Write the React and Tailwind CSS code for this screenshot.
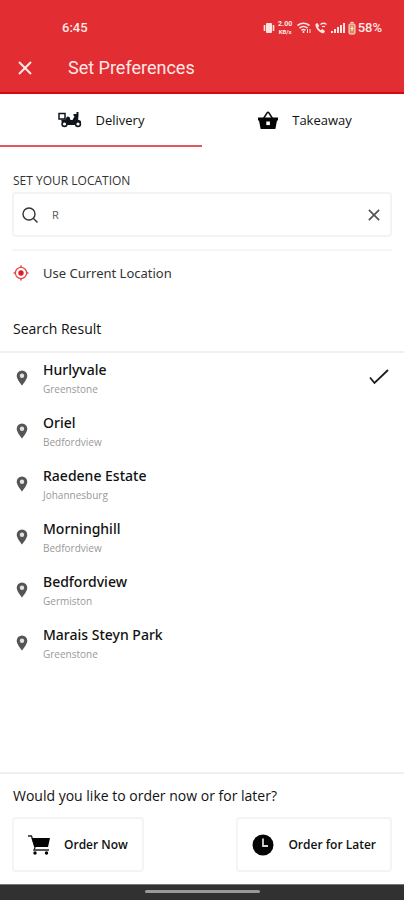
import React, { useState } from "react";

const places = [
  { name: "Hurlyvale", area: "Greenstone" },
  { name: "Oriel", area: "Bedfordview" },
  { name: "Raedene Estate", area: "Johannesburg" },
  { name: "Morninghill", area: "Bedfordview" },
  { name: "Bedfordview", area: "Germiston" },
  { name: "Marais Steyn Park", area: "Greenstone" },
];

function CloseIcon({ className }) {
  return (
    <svg viewBox="0 0 14 14" className={className} fill="none" stroke="currentColor" aria-hidden="true">
      <path d="M1 1l12 12M13 1L1 13" />
    </svg>
  );
}

function VibrateIcon() {
  return (
    <svg viewBox="0 0 12 14" className="h-[14px] w-3" fill="#ffe3e0" aria-hidden="true">
      <rect x="3" y="2" width="6" height="10" rx="1" />
      <path d="M1.500 4v6M10.500 4v6" stroke="#ffe3e0" strokeWidth="1.600" />
    </svg>
  );
}

function SignalIcons() {
  return (
    <svg viewBox="32 0 61 14" className="h-[14px] w-[61px]" fill="#ffe3e0" aria-hidden="true">
      <g fill="none" stroke="#ffe3e0" strokeWidth="1.600">
        <path d="M33.500 4.500q6-4.500 12 0M35.500 7q4-3 8 0M37.500 9.300q2-1.500 4 0" />
        <path d="M43.500 8v4M46 8v4" strokeWidth="1" />
      </g>
      <circle cx="39.500" cy="11" r="1" />
      <path d="M51.500 3l2-1 1.800 3-1.300 1.300q1 2 2.800 3l1.500-1.300 2.700 2-1 2q-1.500.8-4-1Q51 7.500 51.500 3z" />
      <path d="M56.500 3.500q3-2.500 6 0M58 5.800q1.500-1 3 0" fill="none" stroke="#ffe3e0" strokeWidth="1.300" />
      <rect x="67" y="10" width="2" height="2" />
      <rect x="70" y="8" width="2" height="4" />
      <rect x="73" y="6" width="2" height="6" />
      <rect x="76" y="4" width="2" height="8" />
      <rect x="79" y="2" width="2" height="10" />
      <rect x="85" y="3" width="6" height="10" rx="1" fill="#d98a55" stroke="#ffe3e0" />
      <path d="M86.500 1.500h3" stroke="#ffe3e0" strokeWidth="1.200" />
      <path d="M88 5v5M86.500 7.500h3" stroke="#fff3ec" />
    </svg>
  );
}

function ScooterIcon() {
  return (
    <svg viewBox="0 0 24 16" className="h-4 w-6" aria-hidden="true">
      <path d="M1 1.500h6v5.500H1z" fill="#fff" stroke="#10141c" strokeWidth="1.500" />
      <path d="M3 7.500h4.500L9 4.500l2.500.5 1 3h2l2-3.500-1-1V2h3V0h2v4l-.5 3.500 3 1.500v1.500h-3.500l-3 2.500H9.500L8 10.500H4z" fill="#10141c" />
      <circle cx="6.500" cy="12" r="2.400" fill="#fff" stroke="#10141c" strokeWidth="1.600" />
      <circle cx="20" cy="12" r="2.400" fill="#fff" stroke="#10141c" strokeWidth="1.600" />
    </svg>
  );
}

function BasketIcon() {
  return (
    <svg viewBox="0 0 20 18" className="h-[18px] w-5" aria-hidden="true">
      <path d="M5.500 7.500L9 2q1-1.300 2 0l3.500 5.500" fill="none" stroke="#111" strokeWidth="1.500" />
      <path d="M0 6.500h20v3h-1L17.500 17.500q-.2.500-1 .5h-13q-.8 0-1-.5L1 9.500H0z" fill="#050505" />
      <rect x="8.300" y="10.500" width="3.600" height="3.600" fill="#fff" />
    </svg>
  );
}

function SearchIcon() {
  return (
    <svg viewBox="0 0 16 16" className="size-4 shrink-0" fill="none" stroke="#333" strokeWidth="1.400" aria-hidden="true">
      <circle cx="7" cy="7" r="6" />
      <path d="M11.500 11.500l4 4" />
    </svg>
  );
}

function TargetIcon() {
  return (
    <svg viewBox="0 0 16 16" className="size-4 shrink-0" aria-hidden="true">
      <circle cx="8" cy="8" r="5.600" fill="none" stroke="#e04a4a" strokeWidth="1.300" />
      <path d="M8 .5v2M8 13.500v2M.5 8h2M13.500 8h2" stroke="#e04a4a" strokeWidth="1.600" />
      <circle cx="8" cy="8" r="2.700" fill="#dc1f26" />
    </svg>
  );
}

function PinIcon() {
  return (
    <svg viewBox="0 0 12 16" className="h-4 w-3 shrink-0" aria-hidden="true">
      <path d="M6 .5A5.300 5.300 0 0 0 .7 5.800C.7 9.500 6 15.500 6 15.500s5.300-6 5.300-9.700A5.300 5.300 0 0 0 6 .5z" fill="#555" />
      <circle cx="6" cy="5.700" r="2.200" fill="#e2e2e2" />
    </svg>
  );
}

function CheckIcon() {
  return (
    <svg viewBox="0 0 20 16" className="h-4 w-5 shrink-0" fill="none" stroke="#1c1c1c" strokeWidth="1.800" aria-hidden="true">
      <path d="M1 8.500l4.500 5.500L19 1" />
    </svg>
  );
}

function CartIcon() {
  return (
    <svg viewBox="0 0 22 20" className="h-5 w-[22px] shrink-0" aria-hidden="true">
      <path d="M0 1h3.500l3.500 11.500-1 2.500h15" fill="none" stroke="#222" strokeWidth="1.300" />
      <path d="M3.500 3H22l-2 9H6.500z" fill="#050505" />
      <circle cx="7" cy="18" r="1.700" />
      <circle cx="18.500" cy="18" r="1.700" />
    </svg>
  );
}

function ClockIcon() {
  return (
    <svg viewBox="0 0 22 22" className="size-[22px] shrink-0" aria-hidden="true">
      <circle cx="11" cy="11" r="10.500" fill="#050505" />
      <path d="M11 4.500v7.500h5" fill="none" stroke="#d8d8d8" strokeWidth="1.800" />
    </svg>
  );
}

export default function App() {
  const [query, setQuery] = useState("R");
  const [selected, setSelected] = useState("Hurlyvale");

  return (
    <div className="flex min-h-screen flex-col bg-white font-['Open_Sans',sans-serif] text-[13px] leading-5 text-[#111]">
      <header className="border-b-2 border-[#cf0a10] bg-[#e22d32] text-[#ffe9e6]">
        <div className="flex items-center justify-between pt-[18px] pr-[22px] pl-[62px] font-[Roboto,sans-serif] font-medium">
          <span>6:45</span>
          <div className="flex items-center gap-px">
            <VibrateIcon />
            <span className="flex w-[19px] flex-col items-center font-bold">
              <span className="text-[7px] leading-[8px]">2.00</span>
              <span className="text-[6px] leading-[8px]">KB/s</span>
            </span>
            <SignalIcons />
            <span>58%</span>
          </div>
        </div>
        <div className="flex items-center gap-9 px-[18px] pt-4 pb-[10px]">
          <button type="button" aria-label="Close">
            <CloseIcon className="size-[14px] stroke-2" />
          </button>
          <h1 className="font-[Roboto,sans-serif] text-lg leading-7">Set Preferences</h1>
        </div>
      </header>

      <nav className="grid grid-cols-2">
        <button type="button" className="flex h-[53px] items-center justify-center gap-[14px] border-b-2 border-[#df5a60]">
          <ScooterIcon />
          Delivery
        </button>
        <button type="button" className="flex h-[53px] items-center justify-center gap-[14px] border-b-2 border-transparent pl-1">
          <BasketIcon />
          Takeaway
        </button>
      </nav>

      <main className="pt-6">
        <section className="px-3">
          <label htmlFor="location" className="block pl-px text-xs leading-5 text-[#333]">SET YOUR LOCATION</label>
          <div className="mt-px flex h-[45px] items-center gap-[14px] rounded border-2 border-[#f3f3f3] px-2">
            <SearchIcon />
            <input
              id="location"
              value={query}
              onChange={(e) => setQuery(e.target.value)}
              className="min-w-0 flex-1 text-[11px] text-[#555] outline-none"
            />
            <button type="button" aria-label="Clear" onClick={() => setQuery("")} className="pr-[2px]">
              <CloseIcon className="size-3 stroke-[#555] stroke-2" />
            </button>
          </div>
          <div className="mt-3 border-t-2 border-[#f6f6f6] pt-3">
            <button type="button" className="flex items-center gap-[14px] pl-px font-['Noto_Sans',sans-serif] text-[#333]">
              <TargetIcon />
              Use Current Location
            </button>
          </div>
        </section>

        <section className="pt-9">
          <h2 className="border-b-2 border-[#efefef] px-[13px] pb-3 text-sm leading-5">Search Result</h2>
          <ul className="pt-[7px]">
            {places.map((place) => (
              <li key={place.name}>
                <button
                  type="button"
                  onClick={() => setSelected(place.name)}
                  className="flex h-[53px] w-full items-start gap-[15px] pr-[15px] pl-4 text-left"
                >
                  <span className="pt-[10px]"><PinIcon /></span>
                  <span className="flex-1">
                    <span className="block font-['Noto_Sans',sans-serif] text-sm leading-5 font-medium">{place.name}</span>
                    <span className="block text-[10px] leading-[18px] text-[#999]">{place.area}</span>
                  </span>
                  {selected === place.name && <span className="pt-[9px]"><CheckIcon /></span>}
                </button>
              </li>
            ))}
          </ul>
        </section>
      </main>

      <footer className="mt-auto">
        <div className="border-t-2 border-[#efefef] px-3 pt-3 pb-3">
          <p className="pl-px text-sm leading-5">Would you like to order now or for later?</p>
          <div className="mt-[11px] flex justify-between">
            <button type="button" className="flex h-[55px] items-center gap-[14px] rounded border-2 border-[#f4f4f4] px-[14px] text-xs font-semibold">
              <CartIcon />
              Order Now
            </button>
            <button type="button" className="flex h-[55px] items-center gap-[14px] rounded border-2 border-[#f4f4f4] px-[14px] text-xs font-semibold">
              <ClockIcon />
              Order for Later
            </button>
          </div>
        </div>
        <div className="h-4 border-t border-[#777] bg-[#313131] pt-[5px]">
          <div className="mx-auto h-[3px] w-[115px] rounded-full bg-[#999]" />
        </div>
      </footer>
    </div>
  );
}
